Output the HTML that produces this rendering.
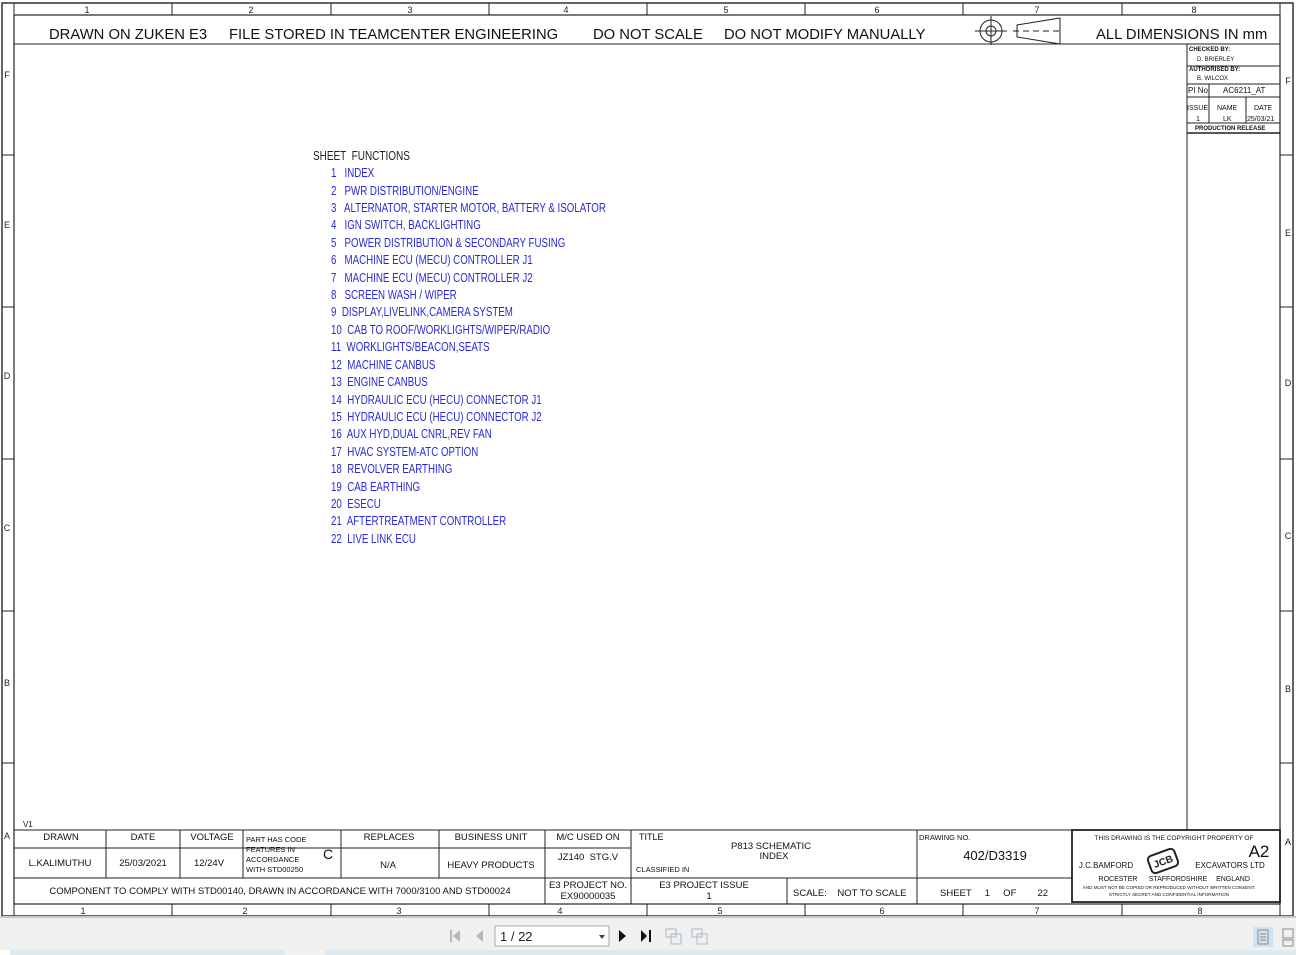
<!DOCTYPE html>
<html><head><meta charset="utf-8"><style>
html,body{margin:0;padding:0;width:1296px;height:955px;overflow:hidden;background:#fff;font-family:"Liberation Sans",Arial,sans-serif}
svg{display:block}
text{white-space:pre}
</style></head><body>
<svg width="1296" height="955" viewBox="0 0 1296 955" xmlns="http://www.w3.org/2000/svg" xml:space="preserve" font-family="Liberation Sans, Arial, sans-serif">
<rect x="0" y="0" width="1296" height="955" fill="#fff"/>
<rect x="2" y="3" width="1291" height="913" fill="none" stroke="#333" stroke-width="1.5"/>
<rect x="14" y="15" width="1266" height="889" fill="none" stroke="#222" stroke-width="1.2"/>
<line x1="14" y1="3" x2="14" y2="916" stroke="#222"/>
<line x1="1280" y1="3" x2="1280" y2="916" stroke="#222"/>
<line x1="14" y1="44" x2="1280" y2="44" stroke="#222"/>
<g stroke="#222">
<line x1="172" y1="3" x2="172" y2="15"/><line x1="331" y1="3" x2="331" y2="15"/><line x1="489" y1="3" x2="489" y2="15"/><line x1="647" y1="3" x2="647" y2="15"/><line x1="805" y1="3" x2="805" y2="15"/><line x1="963" y1="3" x2="963" y2="15"/><line x1="1122" y1="3" x2="1122" y2="15"/>
<line x1="172" y1="904" x2="172" y2="916"/><line x1="331" y1="904" x2="331" y2="916"/><line x1="489" y1="904" x2="489" y2="916"/><line x1="647" y1="904" x2="647" y2="916"/><line x1="805" y1="904" x2="805" y2="916"/><line x1="963" y1="904" x2="963" y2="916"/><line x1="1122" y1="904" x2="1122" y2="916"/>
<line x1="2" y1="155" x2="14" y2="155"/><line x1="2" y1="307" x2="14" y2="307"/><line x1="2" y1="459" x2="14" y2="459"/><line x1="2" y1="611" x2="14" y2="611"/><line x1="2" y1="763" x2="14" y2="763"/>
<line x1="1280" y1="155" x2="1293" y2="155"/><line x1="1280" y1="307" x2="1293" y2="307"/><line x1="1280" y1="459" x2="1293" y2="459"/><line x1="1280" y1="611" x2="1293" y2="611"/><line x1="1280" y1="763" x2="1293" y2="763"/>
</g>
<g font-size="9" fill="#222" text-anchor="middle">
<text x="87" y="13">1</text><text x="251" y="13">2</text><text x="410" y="13">3</text><text x="566" y="13">4</text><text x="726" y="13">5</text><text x="877" y="13">6</text><text x="1037" y="13">7</text><text x="1194" y="13">8</text>
<text x="83" y="914">1</text><text x="245" y="914">2</text><text x="399" y="914">3</text><text x="560" y="914">4</text><text x="720" y="914">5</text><text x="882" y="914">6</text><text x="1037" y="914">7</text><text x="1200" y="914">8</text>
<text x="7" y="78">F</text><text x="7" y="228">E</text><text x="7" y="379">D</text><text x="7" y="531">C</text><text x="7" y="686">B</text><text x="7" y="839">A</text>
<text x="1288" y="84">F</text><text x="1288" y="236">E</text><text x="1288" y="386">D</text><text x="1288" y="539">C</text><text x="1288" y="692">B</text><text x="1288" y="845">A</text>
</g>
<g font-size="14.8" fill="#111">
<text x="49" y="39">DRAWN ON ZUKEN E3</text>
<text x="229" y="39">FILE STORED IN TEAMCENTER ENGINEERING</text>
<text x="593" y="39">DO NOT SCALE</text>
<text x="724" y="39">DO NOT MODIFY MANUALLY</text>
<text x="1096" y="39">ALL DIMENSIONS IN mm</text>
</g>
<g stroke="#222" fill="none" stroke-width="1">
<circle cx="991" cy="31" r="11"/><circle cx="991" cy="31" r="5"/>
<line x1="975" y1="31" x2="1007" y2="31"/><line x1="991" y1="16" x2="991" y2="45"/>
<polygon points="1017,25 1060,18 1060,44 1017,37"/>
<line x1="1013" y1="31" x2="1062" y2="31" stroke-dasharray="6,4"/>
</g>
<g stroke="#222" fill="none">
<line x1="1187" y1="44" x2="1187" y2="830"/>
<line x1="1187" y1="66" x2="1280" y2="66"/><line x1="1187" y1="84" x2="1280" y2="84"/><line x1="1187" y1="97" x2="1280" y2="97"/><line x1="1187" y1="123" x2="1280" y2="123"/><line x1="1187" y1="133" x2="1280" y2="133" stroke-width="1.5"/>
<line x1="1209" y1="84" x2="1209" y2="123"/><line x1="1246" y1="97" x2="1246" y2="123"/>
</g>
<g font-size="6" fill="#111" font-weight="bold">
<text x="1189" y="51">CHECKED BY:</text><text x="1197" y="61" font-weight="normal">D. BRIERLEY</text>
<text x="1189" y="71">AUTHORISED BY:</text><text x="1197" y="80" font-weight="normal">B. WILCOX</text>
<text x="1195" y="130">PRODUCTION RELEASE</text>
</g>
<g font-size="8" fill="#111">
<text x="1188" y="93">PI No</text><text x="1223" y="93">AC6211_AT</text>
<text x="1187" y="110" font-size="7">ISSUE</text><text x="1217" y="110" font-size="7">NAME</text><text x="1254" y="110" font-size="7">DATE</text>
<text x="1196" y="121" font-size="7">1</text><text x="1223" y="121" font-size="7">LK</text><text x="1247" y="121" font-size="7">25/03/21</text>
</g>
<g transform="translate(313,0) scale(0.8,1)" font-size="12.5" fill="#222">
<text x="0" y="160">SHEET  FUNCTIONS</text>
</g>
<g transform="translate(331,0) scale(0.78,1)" font-size="12.5" fill="#2a2ad8">
<text x="0" y="177">1   INDEX</text>
<text x="0" y="195">2   PWR DISTRIBUTION/ENGINE</text>
<text x="0" y="212">3   ALTERNATOR, STARTER MOTOR, BATTERY &amp; ISOLATOR</text>
<text x="0" y="229">4   IGN SWITCH, BACKLIGHTING</text>
<text x="0" y="247">5   POWER DISTRIBUTION &amp; SECONDARY FUSING</text>
<text x="0" y="264">6   MACHINE ECU (MECU) CONTROLLER J1</text>
<text x="0" y="282">7   MACHINE ECU (MECU) CONTROLLER J2</text>
<text x="0" y="299">8   SCREEN WASH / WIPER</text>
<text x="0" y="316">9  DISPLAY,LIVELINK,CAMERA SYSTEM</text>
<text x="0" y="334">10  CAB TO ROOF/WORKLIGHTS/WIPER/RADIO</text>
<text x="0" y="351">11  WORKLIGHTS/BEACON,SEATS</text>
<text x="0" y="369">12  MACHINE CANBUS</text>
<text x="0" y="386">13  ENGINE CANBUS</text>
<text x="0" y="404">14  HYDRAULIC ECU (HECU) CONNECTOR J1</text>
<text x="0" y="421">15  HYDRAULIC ECU (HECU) CONNECTOR J2</text>
<text x="0" y="438">16  AUX HYD,DUAL CNRL,REV FAN</text>
<text x="0" y="456">17  HVAC SYSTEM-ATC OPTION</text>
<text x="0" y="473">18  REVOLVER EARTHING</text>
<text x="0" y="491">19  CAB EARTHING</text>
<text x="0" y="508">20  ESECU</text>
<text x="0" y="525">21  AFTERTREATMENT CONTROLLER</text>
<text x="0" y="543">22  LIVE LINK ECU</text>
</g>
<text x="23" y="827" font-size="8" fill="#111">V1</text>
<g stroke="#222" fill="none">
<line x1="14" y1="830" x2="1280" y2="830"/>
<line x1="14" y1="848" x2="631" y2="848"/>
<line x1="14" y1="878" x2="1072" y2="878"/>
<line x1="106" y1="830" x2="106" y2="878"/><line x1="180" y1="830" x2="180" y2="878"/><line x1="243" y1="830" x2="243" y2="878"/><line x1="341" y1="830" x2="341" y2="878"/><line x1="439" y1="830" x2="439" y2="878"/>
<line x1="545" y1="830" x2="545" y2="904"/><line x1="631" y1="830" x2="631" y2="904"/>
<line x1="787" y1="878" x2="787" y2="904"/><line x1="917" y1="830" x2="917" y2="904"/>
<rect x="1072" y="830" width="208" height="72" stroke-width="1.8"/>
</g>
<g font-size="9.5" fill="#111" text-anchor="middle">
<text x="61" y="840">DRAWN</text><text x="143" y="840">DATE</text><text x="212" y="840">VOLTAGE</text>
<text x="389" y="840">REPLACES</text><text x="491" y="840">BUSINESS UNIT</text><text x="588" y="840">M/C USED ON</text>
<text x="60" y="866">L.KALIMUTHU</text><text x="143" y="866">25/03/2021</text><text x="209" y="866">12/24V</text>
<text x="388" y="868">N/A</text><text x="491" y="868">HEAVY PRODUCTS</text><text x="588" y="860">JZ140  STG.V</text>
<text x="280" y="894">COMPONENT TO COMPLY WITH STD00140, DRAWN IN ACCORDANCE WITH 7000/3100 AND STD00024</text>
<text x="588" y="888">E3 PROJECT NO.</text><text x="588" y="899">EX90000035</text>
<text x="704" y="888">E3 PROJECT ISSUE</text><text x="709" y="899">1</text>
<text x="771" y="849">P813 SCHEMATIC</text><text x="774" y="859">INDEX</text>
<text x="995" y="860" font-size="13">402/D3319</text>
</g>
<g font-size="7.5" fill="#111">
<text x="246" y="842">PART HAS CODE</text><text x="246" y="852">FEATURES IN</text><text x="246" y="862">ACCORDANCE</text><text x="246" y="872">WITH STD00250</text>
<text x="639" y="840" font-size="9">TITLE</text><text x="636" y="872">CLASSIFIED IN</text>
<text x="919" y="840">DRAWING NO.</text>
<text x="793" y="896" font-size="9.5">SCALE:    NOT TO SCALE</text>
<text x="940" y="896" font-size="9.5">SHEET     1     OF        22</text>
</g>
<text x="323" y="859" font-size="14" fill="#111">C</text>
<g fill="#111" text-anchor="middle">
<text x="1174" y="840" font-size="6.5">THIS DRAWING IS THE COPYRIGHT PROPERTY OF</text>
<text x="1259" y="857" font-size="17">A2</text>
<text x="1106" y="868" font-size="8">J.C.BAMFORD</text>
<text x="1230" y="868" font-size="8">EXCAVATORS LTD</text>
<text x="1118" y="881" font-size="7">ROCESTER</text><text x="1178" y="881" font-size="7">STAFFORDSHIRE</text><text x="1233" y="881" font-size="7">ENGLAND</text>
<text x="1169" y="889" font-size="4.6">AND MUST NOT BE COPIED OR REPRODUCED WITHOUT WRITTEN CONSENT.</text>
<text x="1169" y="896" font-size="4.6">STRICTLY SECRET AND CONFIDENTIAL INFORMATION</text>
</g>
<g transform="translate(1163,861) rotate(-20)">
<rect x="-14" y="-9" width="28" height="18" rx="4" fill="#fff" stroke="#222" stroke-width="2"/>
<text x="0" y="4" font-size="10" font-weight="bold" text-anchor="middle" fill="#222">JCB</text>
</g>
<rect x="0" y="917" width="1296" height="38" fill="#f0f0f0"/>
<line x1="0" y1="917" x2="1296" y2="917" stroke="#c8c8c8" stroke-width="2"/>
<rect x="0" y="950" width="1296" height="5" fill="#dcebf0"/>
<rect x="0" y="950" width="10" height="5" fill="#fff"/>
<rect x="285" y="950" width="40" height="5" fill="#f2f2f2"/>
<g fill="#b8b8b8">
<rect x="450" y="930" width="2" height="12"/><polygon points="460,930 453,936 460,942"/>
<polygon points="483,930 476,936 483,942"/>
</g>
<rect x="495" y="926" width="114" height="20" fill="#fff" stroke="#aaa"/>
<text x="500" y="941" font-size="13" fill="#222">1 / 22</text>
<polygon points="599,935 605,935 602,939" fill="#444"/>
<g fill="#111">
<polygon points="619,930 626,936 619,942"/>
<polygon points="641,930 647,936 641,942"/><rect x="649" y="930" width="2" height="12"/>
</g>
<g stroke="#a8b8c8" fill="none">
<rect x="666" y="929" width="10" height="8"/><rect x="671" y="934" width="10" height="10"/>
<rect x="692" y="929" width="10" height="8"/><rect x="697" y="934" width="10" height="10"/>
</g>
<rect x="1253" y="927" width="20" height="20" fill="#cfe3f3"/>
<g stroke="#888" fill="none">
<rect x="1258" y="930" width="10" height="14"/><line x1="1260" y1="934" x2="1266" y2="934"/><line x1="1260" y1="937" x2="1266" y2="937"/><line x1="1260" y1="940" x2="1266" y2="940"/>
<rect x="1283" y="929" width="10" height="9"/><rect x="1283" y="940" width="10" height="6"/>
</g>
</svg>
</body></html>
